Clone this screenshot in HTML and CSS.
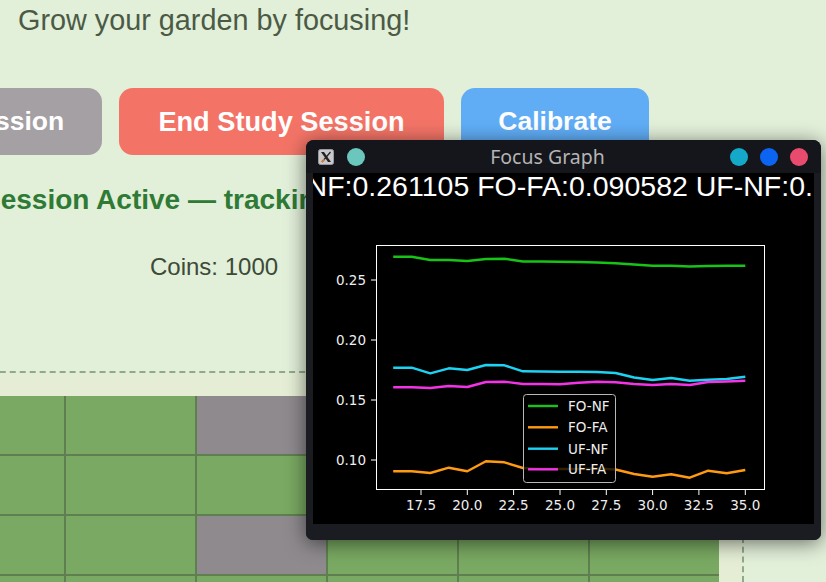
FILE: index.html
```html
<!DOCTYPE html>
<html>
<head>
<meta charset="utf-8">
<link rel="stylesheet" href="styles.css">
</head>
<body>
<div class="page">
  <p class="tagline">Grow your garden by focusing!</p>
  <div class="actions">
    <button class="btn btn-start">Start Study Session</button>
    <button class="btn btn-end">End Study Session</button>
    <button class="btn btn-cal">Calibrate</button>
  </div>
  <p class="status">Session Active — tracking focus</p>
  <p class="coins">Coins: 1000</p>
  <div class="garden">
    <div class="plots">
      <div class="plot"></div><div class="plot"></div><div class="plot bare"></div><div class="plot"></div><div class="plot"></div><div class="plot"></div>
      <div class="plot"></div><div class="plot"></div><div class="plot"></div><div class="plot"></div><div class="plot"></div><div class="plot"></div>
      <div class="plot"></div><div class="plot"></div><div class="plot bare"></div><div class="plot"></div><div class="plot"></div><div class="plot"></div>
      <div class="plot"></div><div class="plot"></div><div class="plot"></div><div class="plot"></div><div class="plot"></div><div class="plot"></div>
    </div>
  </div>

  <div class="window">
    <div class="titlebar">
      <div class="tb-left">
        <svg class="appicon" width="16" height="16" viewBox="0 0 16 16">
          <rect x="0.5" y="0.5" width="15" height="15" rx="2" fill="#c9c8cc" stroke="#9a9a9e"/>
          <path d="M3 3 L6 3 L13 13 L10 13 Z" fill="#222"/>
          <path d="M12.5 3 L4 13" stroke="#222" stroke-width="1.2"/>
          <path d="M3 13 L5.5 9.5 L7 11 L5 13 Z" fill="#e07a2a"/>
        </svg>
        <span class="dot dot-teal"></span>
      </div>
      <div class="wtitle">Focus Graph</div>
      <div class="tb-right">
        <span class="dot dot-cyan"></span>
        <span class="dot dot-blue"></span>
        <span class="dot dot-red"></span>
      </div>
    </div>
    <div class="frame">
      <div class="canvas">
        <div class="readout">FO-NF:0.261105 FO-FA:0.090582 UF-NF:0.167312 UF-FA:0.165210</div>
        <svg class="plot-svg" width="501" height="321" viewBox="0 0 501 321">
          <g fill="none" stroke-width="2.4" stroke-linejoin="round">
            <polyline stroke="#17c317" points="80.2,53.7 98.7,53.7 117.3,57 135.8,57 154.3,58 172.9,56 191.4,55.7 209.9,58.5 228.4,58.5 247,58.7 265.5,59 284,59.5 302.6,60.3 321.1,61.5 339.6,62.7 358.2,62.7 376.7,63.5 395.2,63 413.7,62.7 432.3,62.7"/>
            <polyline stroke="#ff9a12" points="80.2,268.3 98.7,268.3 117.3,270 135.8,264.7 154.3,268.3 172.9,258.3 191.4,259.3 209.9,265 228.4,266 247,266 265.5,266 284,265.5 302.6,266.5 321.1,271 339.6,273.7 358.2,271.3 376.7,274.7 395.2,267.7 413.7,270.3 432.3,267"/>
            <polyline stroke="#1cd3f3" points="80.2,164.7 98.7,164.7 117.3,170.3 135.8,165.3 154.3,167 172.9,162 191.4,162.3 209.9,168.3 228.4,168.5 247,168.7 265.5,168.7 284,169 302.6,170 321.1,174.5 339.6,177 358.2,175 376.7,177.7 395.2,176.7 413.7,176 432.3,173.7"/>
            <polyline stroke="#f233e6" points="80.2,184.3 98.7,184.3 117.3,185 135.8,183 154.3,184 172.9,179 191.4,178.7 209.9,181 228.4,181 247,181.3 265.5,179.7 284,178.7 302.6,179.3 321.1,181 339.6,182 358.2,181 376.7,182 395.2,179 413.7,178.5 432.3,177.7"/>
          </g>
          <rect x="63.5" y="42.5" width="388" height="244" fill="none" stroke="#fff" stroke-width="1"/>
          <g stroke="#fff" stroke-width="1">
            <line x1="58" y1="77" x2="63" y2="77"/>
            <line x1="58" y1="137" x2="63" y2="137"/>
            <line x1="58" y1="197" x2="63" y2="197"/>
            <line x1="58" y1="257" x2="63" y2="257"/>
            <line x1="108" y1="287" x2="108" y2="292"/>
            <line x1="154.3" y1="287" x2="154.3" y2="292"/>
            <line x1="200.6" y1="287" x2="200.6" y2="292"/>
            <line x1="247" y1="287" x2="247" y2="292"/>
            <line x1="293.3" y1="287" x2="293.3" y2="292"/>
            <line x1="339.6" y1="287" x2="339.6" y2="292"/>
            <line x1="385.9" y1="287" x2="385.9" y2="292"/>
            <line x1="432.3" y1="287" x2="432.3" y2="292"/>
          </g>
          <g class="ticks" text-anchor="end">
            <text x="53" y="82">0.25</text>
            <text x="53" y="142">0.20</text>
            <text x="53" y="202">0.15</text>
            <text x="53" y="262">0.10</text>
          </g>
          <g class="ticks" text-anchor="middle">
            <text x="108" y="307">17.5</text>
            <text x="154.3" y="307">20.0</text>
            <text x="200.6" y="307">22.5</text>
            <text x="247" y="307">25.0</text>
            <text x="293.3" y="307">27.5</text>
            <text x="339.6" y="307">30.0</text>
            <text x="385.9" y="307">32.5</text>
            <text x="432.3" y="307">35.0</text>
          </g>
          <rect x="210.5" y="191.5" width="92" height="88" rx="3" fill="#000" fill-opacity="0.8" stroke="#b8b8b8" stroke-width="1"/>
          <g stroke-width="2.4">
            <line x1="215" y1="203" x2="245" y2="203" stroke="#17c317"/>
            <line x1="215" y1="224.3" x2="245" y2="224.3" stroke="#ff9a12"/>
            <line x1="215" y1="245.7" x2="245" y2="245.7" stroke="#1cd3f3"/>
            <line x1="215" y1="266.3" x2="245" y2="266.3" stroke="#f233e6"/>
          </g>
          <g class="ticks">
            <text x="255" y="208">FO-NF</text>
            <text x="255" y="229.3">FO-FA</text>
            <text x="255" y="250.7">UF-NF</text>
            <text x="255" y="271.3">UF-FA</text>
          </g>
        </svg>
      </div>
    </div>
  </div>
</div>
</body>
</html>
```

FILE: styles.css
```css
html, body {
  margin: 0;
  padding: 0;
}

body {
  background: #e2efd9;
  font-family: "Liberation Sans", Arial, sans-serif;
  overflow: hidden;
  width: 826px;
  height: 582px;
}

.page {
  position: relative;
  width: 826px;
  height: 582px;
  padding-top: 4px;
  box-sizing: border-box;
  overflow: hidden;
}

.tagline {
  margin: 0 0 0 18px;
  font-size: 28.8px;
  line-height: 32px;
  color: #4b5a45;
}

.actions {
  display: flex;
  gap: 17px;
  margin: 52px 0 0 -224px;
}

.btn {
  flex: none;
  height: 67px;
  border: none;
  border-radius: 14px;
  color: #fff;
  font-family: "Liberation Sans", Arial, sans-serif;
  font-weight: bold;
  font-size: 26.5px;
  padding: 0;
  text-align: center;
}

.btn-start {
  width: 326px;
  background: #a4a0a4;
}

.btn-end {
  width: 325px;
  font-size: 27.2px;
  background: #f37467;
}

.btn-cal {
  width: 188px;
  background: #60adf6;
}

.status {
  margin: 28px 0 0 -18px;
  font-size: 28px;
  line-height: 34px;
  font-weight: bold;
  color: #2f7a35;
  white-space: nowrap;
}

.coins {
  margin: 36px 0 0 150px;
  font-size: 24px;
  line-height: 28px;
  color: #3c4a37;
}

.garden {
  margin: 90px 0 0 -90px;
  width: 834px;
  box-sizing: border-box;
  border: 2px dashed #8dab8b;
  border-bottom: none;
  padding: 23px 23px 0 23px;
  background: #e5eed5;
  height: 211px;
  overflow: hidden;
}

.plots {
  display: grid;
  grid-template-columns: repeat(6, 129px);
  grid-auto-rows: 58px;
  gap: 2px;
  background: #5f7f50;
}

.plot {
  background: #79a962;
}

.plot.bare {
  background: #8e8a8e;
}

.window {
  position: absolute;
  left: 306px;
  top: 140px;
  width: 515px;
  height: 400px;
  background: #18191e;
  border-radius: 8px 8px 7px 7px;
  box-shadow: 0 3px 20px rgba(0, 0, 0, 0.55);
  overflow: hidden;
}

.titlebar {
  height: 33px;
  display: flex;
  align-items: center;
  padding: 0 13px 0 12px;
  background: #15161b;
}

.tb-left {
  display: flex;
  align-items: center;
  gap: 13px;
}

.tb-right {
  display: flex;
  align-items: center;
  gap: 12px;
}

.appicon {
  display: block;
}

.wtitle {
  flex: 1;
  text-align: center;
  font-family: "Noto Sans", "Open Sans", sans-serif;
  font-size: 19.5px;
  color: #b4b4b6;
}

.dot {
  width: 18px;
  height: 18px;
  border-radius: 50%;
  display: block;
}

.dot-teal { background: #6bc6bd; }
.dot-cyan { background: #14a9c8; }
.dot-blue { background: #0c65f2; }
.dot-red { background: #e94b6e; }

.frame {
  padding: 0 7px 16px 7px;
  background: #1b1c21;
}

.canvas {
  background: #000;
  height: 351px;
  overflow: hidden;
}

.readout {
  height: 30px;
  overflow: hidden;
  white-space: nowrap;
  color: #fff;
  font-family: "Liberation Sans", Arial, sans-serif;
  font-size: 28.5px;
  line-height: 26px;
  text-indent: -55.5px;
}

.plot-svg {
  display: block;
}

.ticks text {
  font-family: "DejaVu Sans", sans-serif;
  font-size: 13.5px;
  fill: #eeeeee;
}
```
